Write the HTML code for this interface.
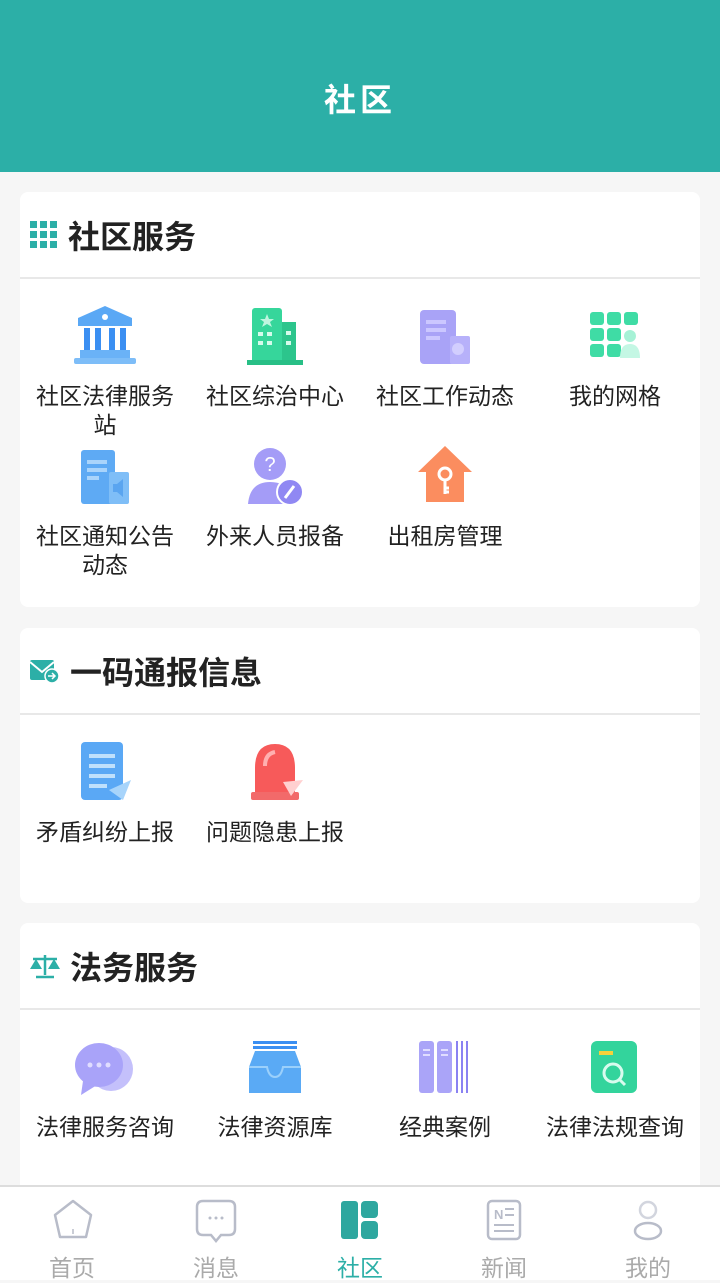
<!DOCTYPE html>
<html><head><meta charset="utf-8">
<style>
*{margin:0;padding:0;box-sizing:border-box}
body{width:720px;height:1280px;overflow:hidden;background:#f6f6f6;font-family:"Liberation Sans","Noto Sans CJK SC",sans-serif;position:relative}
.hdr{position:absolute;left:0;top:0;width:720px;height:172px;background:#2cafa7;color:#fff;font-size:32px;font-weight:bold;text-align:center;line-height:200px;letter-spacing:4px}
.card{position:absolute;left:20px;width:680px;background:#fff;border-radius:8px}
.ct{height:87px;border-bottom:2px solid #e8e8e8;display:flex;align-items:center;padding-left:10px;font-size:32px;font-weight:bold;color:#222}
.ct svg{margin-right:10px}
.it{position:absolute;width:170px;text-align:center;font-size:23px;color:#222;line-height:29px}
.it svg{display:block;margin:0 auto 16px}
.tab{position:absolute;left:0;top:1185px;width:720px;height:95px;background:#fff;border-top:2px solid #ddd}
.tb{position:absolute;width:144px;height:95px;top:0}
.tb span{position:absolute;left:0;width:144px;text-align:center;font-size:23px;color:#aaa;top:62px}
.ti{position:absolute;top:12px}
</style></head><body>
<div class="hdr">社区</div>

<div class="card" style="top:192px;height:415px">
<div class="ct"><svg width="28" height="28"><g fill="#2cafa7"><rect x="0" y="0" width="7" height="7"/><rect x="10" y="0" width="7" height="7"/><rect x="20" y="0" width="7" height="7"/><rect x="0" y="10" width="7" height="7"/><rect x="10" y="10" width="7" height="7"/><rect x="20" y="10" width="7" height="7"/><rect x="0" y="20" width="7" height="7"/><rect x="10" y="20" width="7" height="7"/><rect x="20" y="20" width="7" height="7"/></g></svg>社区服务</div>
<div class="it" style="left:0;top:112px"><svg width="66" height="62"><path d="M33 2 L60 14 V22 H6 V14Z" fill="#5aa8f5"/><circle cx="33" cy="13" r="3" fill="#fff"/><g fill="#3b8ff2"><rect x="12" y="24" width="6" height="22"/><rect x="23" y="24" width="6" height="22"/><rect x="37" y="24" width="6" height="22"/><rect x="48" y="24" width="6" height="22"/></g><rect x="8" y="46" width="50" height="8" fill="#6ab2f7"/><rect x="2" y="54" width="62" height="6" rx="2" fill="#7dbdf8"/></svg>社区法律服务<br>站</div>
<div class="it" style="left:170px;top:112px"><svg width="56" height="62"><rect x="5" y="4" width="30" height="56" rx="3" fill="#36d69b"/><rect x="35" y="18" width="14" height="42" fill="#2cc58c"/><rect x="0" y="56" width="56" height="5" fill="#28bf86"/><path d="M20 10l2 5h5l-4 3 2 5-5-3-5 3 2-5-4-3h5z" fill="#bff5df"/><g fill="#d5fbec"><rect x="11" y="28" width="5" height="4"/><rect x="20" y="28" width="5" height="4"/><rect x="11" y="37" width="5" height="4"/><rect x="20" y="37" width="5" height="4"/><rect x="39" y="27" width="5" height="4"/><rect x="39" y="37" width="5" height="4"/></g></svg>社区综治中心</div>
<div class="it" style="left:340px;top:112px"><svg width="50" height="62"><rect x="0" y="6" width="36" height="54" rx="4" fill="#a9a3f7"/><rect x="30" y="32" width="20" height="28" rx="2" fill="#b7b1fa"/><g fill="#cbc7ff"><rect x="6" y="16" width="20" height="4"/><rect x="6" y="24" width="20" height="4"/><rect x="6" y="32" width="14" height="4"/></g><circle cx="38" cy="45" r="6" fill="#d2cefe"/></svg>社区工作动态</div>
<div class="it" style="left:510px;top:112px"><svg width="50" height="62"><g fill="#3fdca5"><rect x="0" y="8" width="14" height="13" rx="3"/><rect x="17" y="8" width="14" height="13" rx="3"/><rect x="34" y="8" width="14" height="13" rx="3"/><rect x="0" y="24" width="14" height="13" rx="3"/><rect x="17" y="24" width="14" height="13" rx="3"/><rect x="0" y="40" width="14" height="13" rx="3"/><rect x="17" y="40" width="14" height="13" rx="3"/></g><circle cx="40" cy="32" r="6" fill="#a6f2d6"/><path d="M30 54 Q30 40 40 40 Q50 40 50 54Z" fill="#c4f7e4"/></svg>我的网格</div>
<div class="it" style="left:0;top:252px"><svg width="52" height="62"><rect x="2" y="6" width="34" height="54" rx="3" fill="#5eaaf4"/><rect x="30" y="28" width="20" height="32" rx="2" fill="#7fbef7"/><g fill="#a9d4fb"><rect x="8" y="16" width="20" height="4"/><rect x="8" y="24" width="20" height="4"/><rect x="8" y="32" width="12" height="4"/></g><path d="M34 40h4l6-5v18l-6-5h-4z" fill="#5aa5f0"/></svg>社区通知公告<br>动态</div>
<div class="it" style="left:170px;top:252px"><svg width="58" height="62"><circle cx="24" cy="20" r="16" fill="#a49cf7"/><text x="24" y="27" font-size="20" fill="#fff" text-anchor="middle" font-family="Liberation Sans">?</text><path d="M2 60 Q4 38 24 38 Q40 38 44 50 L44 60Z" fill="#a49cf7"/><circle cx="44" cy="48" r="13" fill="#9088f3" stroke="#fff" stroke-width="2"/><path d="M39 54 L48 42" stroke="#fff" stroke-width="3"/></svg>外来人员报备</div>
<div class="it" style="left:340px;top:252px"><svg width="58" height="62"><path d="M29 2 L56 28 H48 V58 H10 V28 H2Z" fill="#fb8d5f"/><circle cx="29" cy="30" r="6" fill="none" stroke="#fff" stroke-width="3"/><path d="M29 36 V50 M29 44h4M29 48h4" stroke="#fff" stroke-width="3"/></svg>出租房管理</div>
</div>

<div class="card" style="top:628px;height:275px">
<div class="ct"><svg width="30" height="26"><rect x="0" y="2" width="24" height="20" rx="2" fill="#2cafa7"/><path d="M0 4 L12 14 L24 4" stroke="#fff" stroke-width="2" fill="none"/><circle cx="22" cy="18" r="7" fill="#2cafa7" stroke="#fff" stroke-width="1.5"/><path d="M18 18h7M22 15l3 3-3 3" stroke="#fff" stroke-width="1.5" fill="none"/></svg>一码通报信息</div>
<div class="it" style="left:0;top:112px"><svg width="52" height="62"><rect x="2" y="2" width="42" height="58" rx="4" fill="#5aa8f5"/><g fill="#bfe0fc"><rect x="10" y="14" width="26" height="4"/><rect x="10" y="24" width="26" height="4"/><rect x="10" y="34" width="26" height="4"/><rect x="10" y="44" width="18" height="4"/></g><path d="M30 50 L52 40 L44 60Z" fill="#a7d4fb"/></svg>矛盾纠纷上报</div>
<div class="it" style="left:170px;top:112px"><svg width="60" height="62"><path d="M10 58 V28 Q10 4 30 4 Q50 4 50 28 V58Z" fill="#f75a5a"/><rect x="6" y="52" width="48" height="8" rx="2" fill="#f26a6a"/><path d="M20 26 Q20 14 30 12" stroke="#ffb0b0" stroke-width="4" fill="none"/><path d="M38 42 L58 40 L46 56Z" fill="#ffd0d0"/></svg>问题隐患上报</div>
</div>

<div class="card" style="top:923px;height:300px">
<div class="ct"><svg width="30" height="26"><path d="M15 2V22M6 24h18M3 6h24" stroke="#2cafa7" stroke-width="2.5"/><path d="M0 16 L6 6 L12 16Z M18 16 L24 6 L30 16Z" fill="#2cafa7"/></svg>法务服务</div>
<div class="it" style="left:0;top:118px"><svg width="64" height="56"><ellipse cx="38" cy="28" rx="22" ry="22" fill="#c4c0fb"/><ellipse cx="26" cy="24" rx="24" ry="22" fill="#a9a3f9"/><path d="M10 40 L8 54 L24 44Z" fill="#a9a3f9"/><g fill="#e0ddff"><circle cx="17" cy="24" r="2.5"/><circle cx="26" cy="24" r="2.5"/><circle cx="35" cy="24" r="2.5"/></g></svg>法律服务咨询</div>
<div class="it" style="left:170px;top:118px"><svg width="56" height="56"><rect x="6" y="0" width="44" height="3" fill="#3b8ff2"/><rect x="6" y="5" width="44" height="3" fill="#3b8ff2"/><path d="M8 10 H48 L54 26 V52 H2 V26Z" fill="#5aaaf5"/><path d="M2 26 H20 Q22 36 28 36 Q34 36 36 26 H54" stroke="#9bd0fb" stroke-width="2" fill="none"/></svg>法律资源库</div>
<div class="it" style="left:340px;top:118px"><svg width="56" height="56"><rect x="2" y="0" width="15" height="52" rx="3" fill="#aaa4f8"/><rect x="20" y="0" width="15" height="52" rx="3" fill="#aaa4f8"/><g stroke="#8a82f2" stroke-width="2"><path d="M40 0V52M45 0V52M50 0V52"/></g><g fill="#e0ddff"><rect x="6" y="8" width="7" height="2"/><rect x="6" y="13" width="7" height="2"/><rect x="24" y="8" width="7" height="2"/><rect x="24" y="13" width="7" height="2"/></g></svg>经典案例</div>
<div class="it" style="left:510px;top:118px"><svg width="48" height="56"><rect x="0" y="0" width="46" height="52" rx="6" fill="#33d49c"/><rect x="8" y="10" width="14" height="4" fill="#f7d13b"/><circle cx="22" cy="32" r="9" fill="none" stroke="#d8fbee" stroke-width="3"/><path d="M28 38 L34 44" stroke="#d8fbee" stroke-width="3"/></svg>法律法规查询</div>
</div>

<div class="tab">
<div class="tb" style="left:0"><svg class="ti" style="left:52px" width="42" height="42"><path d="M21 2 L39 16 L34 38 H8 L3 16Z" fill="none" stroke="#b8bcc9" stroke-width="2.5" stroke-linejoin="round"/><path d="M21 30v5" stroke="#b8bcc9" stroke-width="1.5"/></svg><span>首页</span></div>
<div class="tb" style="left:144px"><svg class="ti" style="left:51px" width="42" height="46"><path d="M8 2 H34 Q40 2 40 8 V30 Q40 36 34 36 H26 L21 42 L16 36 H8 Q2 36 2 30 V8 Q2 2 8 2Z" fill="none" stroke="#b8bcc9" stroke-width="2.5"/><g fill="#b8bcc9"><circle cx="15" cy="19" r="1.5"/><circle cx="21" cy="19" r="1.5"/><circle cx="27" cy="19" r="1.5"/></g></svg><span>消息</span></div>
<div class="tb" style="left:288px"><svg class="ti" style="left:53px" width="38" height="42"><rect x="0" y="2" width="17" height="38" rx="3" fill="#2ea79f"/><rect x="20" y="2" width="17" height="17" rx="4" fill="#2ea79f"/><rect x="20" y="22" width="17" height="18" rx="4" fill="#2ea79f"/></svg><span style="color:#2cafa7">社区</span></div>
<div class="tb" style="left:432px"><svg class="ti" style="left:54px" width="36" height="42"><rect x="2" y="2" width="32" height="38" rx="4" fill="none" stroke="#b8bcc9" stroke-width="2.5"/><text x="8" y="20" font-size="13" font-weight="bold" fill="#b8bcc9" font-family="Liberation Sans">N</text><path d="M19 10h9M19 16h9M8 26h20M8 32h20" stroke="#b8bcc9" stroke-width="2"/></svg><span>新闻</span></div>
<div class="tb" style="left:576px"><svg class="ti" style="left:56px" width="32" height="44"><circle cx="16" cy="11" r="8" fill="none" stroke="#d2d5de" stroke-width="2.5"/><ellipse cx="16" cy="32" rx="13" ry="8" fill="none" stroke="#b8bcc9" stroke-width="2.5"/></svg><span>我的</span></div>
</div>
</body></html>
